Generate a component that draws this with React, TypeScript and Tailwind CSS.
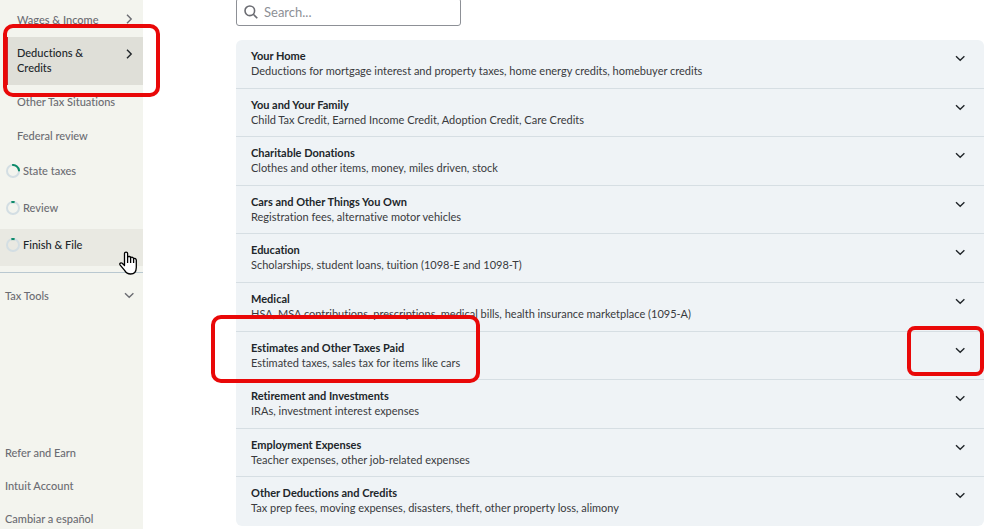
import clsx from 'clsx';

const steps = [
  { label: 'Wages & Income', arrow: true },
  { label: 'Deductions & Credits', arrow: true, active: true },
  { label: 'Other Tax Situations' },
  { label: 'Federal review' },
];

const sections = [
  { label: 'State taxes', progress: 25 },
  { label: 'Review', progress: 6 },
  { label: 'Finish & File', progress: 6, hovered: true },
];

const footerLinks = ['Refer and Earn', 'Intuit Account', 'Cambiar a español'];

const categories = [
  { title: 'Your Home', text: 'Deductions for mortgage interest and property taxes, home energy credits, homebuyer credits' },
  { title: 'You and Your Family', text: 'Child Tax Credit, Earned Income Credit, Adoption Credit, Care Credits' },
  { title: 'Charitable Donations', text: 'Clothes and other items, money, miles driven, stock' },
  { title: 'Cars and Other Things You Own', text: 'Registration fees, alternative motor vehicles' },
  { title: 'Education', text: 'Scholarships, student loans, tuition (1098-E and 1098-T)' },
  { title: 'Medical', text: 'HSA, MSA contributions, prescriptions, medical bills, health insurance marketplace (1095-A)' },
  { title: 'Estimates and Other Taxes Paid', text: 'Estimated taxes, sales tax for items like cars' },
  { title: 'Retirement and Investments', text: 'IRAs, investment interest expenses' },
  { title: 'Employment Expenses', text: 'Teacher expenses, other job-related expenses' },
  { title: 'Other Deductions and Credits', text: 'Tax prep fees, moving expenses, disasters, theft, other property loss, alimony' },
];

function Chevron({ right, className }: { right?: boolean; className?: string }) {
  return (
    <svg viewBox="0 0 12 12" className={clsx('size-3 shrink-0', className)} fill="none" stroke="currentColor" strokeWidth="1.4" aria-hidden="true">
      <path d={right ? 'M4 1.8 8.2 6 4 10.2' : 'M2 4.2 6.2 8.2 10.4 4.2'} />
    </svg>
  );
}

function ProgressRing({ value }: { value: number }) {
  return (
    <svg viewBox="0 0 14 14" className="size-3.5 shrink-0" fill="none" strokeWidth="2" aria-hidden="true">
      <circle cx="7" cy="7" r="6" stroke="#d3dee3" />
      <circle
        cx="7"
        cy="7"
        r="6"
        stroke="#0b8a68"
        pathLength="100"
        strokeDasharray={`${value + 3} 100`}
        transform={value > 10 ? 'rotate(-98 7 7)' : 'rotate(-106 7 7)'}
      />
    </svg>
  );
}

function Sidebar() {
  return (
    <nav className="flex w-[143px] shrink-0 flex-col bg-[#f3f4ee] pt-[3px] font-medium text-[#6b6c72]">
      <ul>
        {steps.map((step) => (
          <li key={step.label} className={clsx(!step.active && 'mb-0.5')}>
            <a
              href="#"
              className={clsx(
                'ml-[5px] flex justify-between border-l-[3px] pr-2 pl-[9px]',
                step.active
                  ? 'h-12 items-start border-[#c9252d] bg-[#dfdfd8] pt-2 text-[#21262a]'
                  : 'h-8 items-center border-transparent',
              )}
            >
              <span className={clsx(step.active ? 'w-20' : 'whitespace-nowrap')}>{step.label}</span>
              {step.arrow && <Chevron right className={clsx(step.active && 'mt-[3px]')} />}
            </a>
          </li>
        ))}
      </ul>

      <ul className="mt-0.5">
        {sections.map((section) => (
          <li key={section.label}>
            <a
              href="#"
              className={clsx(
                'flex h-[37px] items-center gap-[3px] pb-1.5 pl-1.5',
                section.hovered && 'bg-[#e9e9e2] text-[#21262a]',
              )}
            >
              <ProgressRing value={section.progress} />
              {section.label}
            </a>
          </li>
        ))}
      </ul>

      <hr className="mt-1.5 border-[#b9c8d0]" />
      <button type="button" className="mt-1.5 flex h-8 items-center justify-between pr-2 pl-[5px]">
        Tax Tools
        <Chevron />
      </button>

      <ul className="mt-auto flex flex-col gap-[13px] pl-[5px]">
        {footerLinks.map((label) => (
          <li key={label} className="h-5 leading-5">
            <a href="#">{label}</a>
          </li>
        ))}
      </ul>
    </nav>
  );
}

function HandCursor() {
  return (
    <svg viewBox="0 0 18 24" className="absolute top-[251px] left-[119px] h-6 w-[18px]" fill="white" stroke="black" strokeWidth="1.3" strokeLinejoin="round" aria-hidden="true">
      <path d="M5.5 14.5V2.4C5.5.6 8.6.6 8.6 2.4V6.2C9.6 5 11.4 5.4 11.6 6.6 12.8 5.8 14.4 6.2 14.6 7.6 15.8 7 17.3 7.6 17.3 9.2V16.4C17.2 20.6 15.6 23 11.6 23 8.2 23 7 21.8 5.6 19.4L1 13.8C.2 12.4 2 11.2 3.2 12.2Z" />
      <path d="M8.6 6V12M11.6 6.6V12M14.6 7.6V12" fill="none" />
    </svg>
  );
}

export default function App() {
  return (
    <div className="relative flex h-screen overflow-hidden bg-white font-['Lato',sans-serif] text-[11px] leading-[15px] [font-variant-ligatures:none]">
      <Sidebar />

      <main className="min-w-0 flex-1 pr-3.5 pl-[93px]">
        <label className="-mt-0.5 flex h-7 w-[225px] items-center gap-1.5 rounded-[3px] border border-[#8d9096] pl-[7px]">
          <svg viewBox="0 0 14 14" className="size-3.5 shrink-0" fill="none" stroke="#6b6c72" strokeWidth="1.6" aria-hidden="true">
            <circle cx="5.8" cy="5.8" r="4.8" />
            <path d="m9.3 9.3 4 4" />
          </svg>
          <input
            type="text"
            aria-label="Search"
            placeholder="Search..."
            className="w-full min-w-0 text-[13px] outline-none placeholder:text-[#8d9096]"
          />
        </label>

        <ul className="mt-3.5 grid min-h-[486px] auto-rows-fr overflow-hidden rounded-md bg-[#eff3f6]">
          {categories.map((category) => (
            <li key={category.title} className="border-b border-[#d6dee3] last:border-b-0">
              <button type="button" className="flex w-full items-start justify-between pt-2 pr-[18px] pl-[15px] text-left">
                <span>
                  <span className="block font-bold text-[#21262a]">{category.title}</span>
                  <span className="block text-[#393a3d]">{category.text}</span>
                </span>
                <Chevron className="mt-1 text-[#21262a]" />
              </button>
            </li>
          ))}
        </ul>
      </main>

      {/* highlights */}
      <div className="pointer-events-none absolute top-6 left-[3px] h-[73px] w-[157px] rounded-[10px] border-4 border-[#e90808]" />
      <div className="pointer-events-none absolute top-[315px] left-[211px] h-[68px] w-[269px] rounded-[10px] border-4 border-[#e90808]" />
      <div className="pointer-events-none absolute top-[326px] right-3.5 h-[50px] w-[77px] rounded-[8px] border-4 border-[#e90808]" />
      <HandCursor />
    </div>
  );
}
